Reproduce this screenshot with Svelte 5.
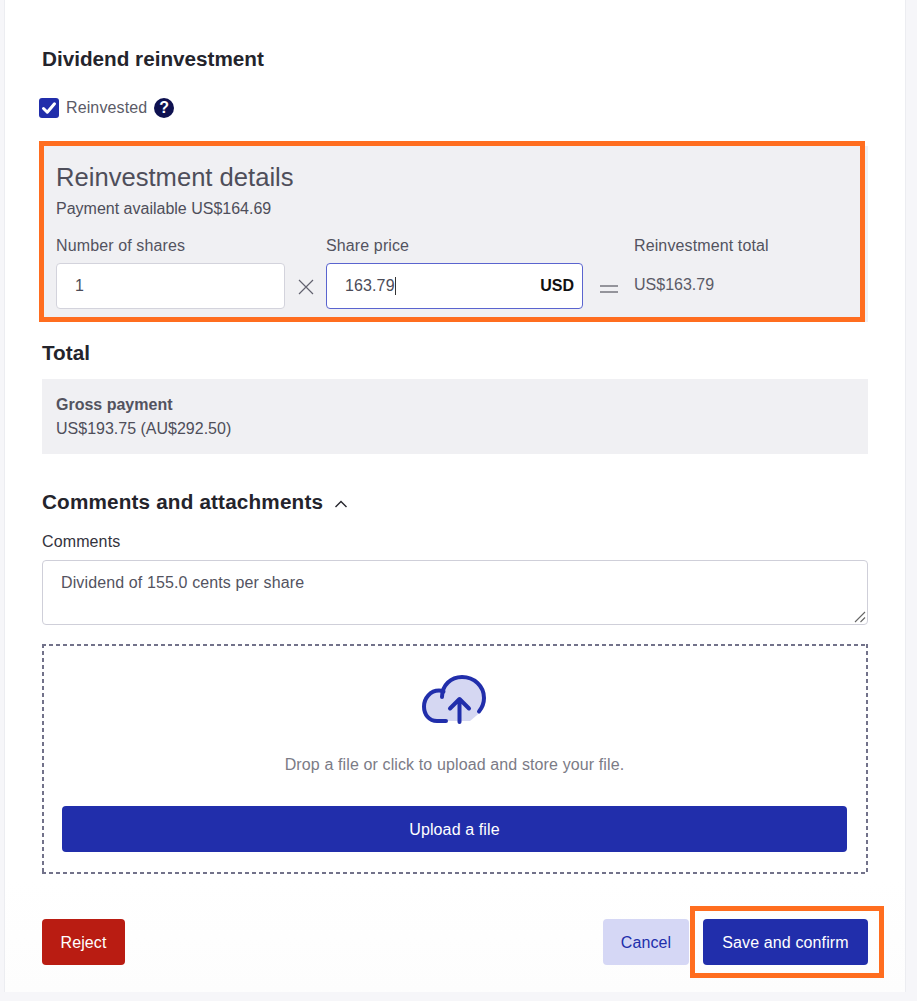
<script>
  const gross = 'US$193.75 (AU$292.50)';
</script>

<div class="page">
  <main class="card">
    <h2 class="h-first">Dividend reinvestment</h2>

    <div class="check-row">
      <span class="checkbox">
        <svg viewBox="0 0 20 20" width="20" height="20"><path d="M4.500 10.500l3.800 3.700L15.500 5.800" fill="none" stroke="#fff" stroke-width="3" stroke-linecap="round" stroke-linejoin="round"/></svg>
      </span>
      <span class="check-label">Reinvested</span>
      <span class="help">?</span>
    </div>

    <section class="panel">
      <div class="annot"></div>
      <h3>Reinvestment details</h3>
      <p class="avail">Payment available US$164.69</p>
      <div class="calc">
        <div class="field f1">
          <span class="label">Number of shares</span>
          <div class="input">1</div>
        </div>
        <svg class="op" viewBox="0 0 16 16" width="16" height="16"><path d="M1 1l14 14M15 1L1 15" stroke="#62626f" stroke-width="1.200" fill="none"/></svg>
        <div class="field f2">
          <span class="label">Share price</span>
          <div class="input focus"><span>163.79<i class="caret"></i></span><b>USD</b></div>
        </div>
        <svg class="op eq" viewBox="0 0 20 10" width="20" height="10"><path d="M1 2h18M1 8h18" stroke="#75757f" stroke-width="1.400" fill="none"/></svg>
        <div class="field f3">
          <span class="label">Reinvestment total</span>
          <div class="total-val">US$163.79</div>
        </div>
      </div>
    </section>

    <h2 class="h-total">Total</h2>
    <section class="gross">
      <strong>Gross payment</strong>
      <span>{gross}</span>
    </section>

    <div class="h-row">
      <h2>Comments and attachments</h2>
      <svg viewBox="0 0 14 8" width="14" height="8"><path d="M1.500 7L7 1.500 12.500 7" fill="none" stroke="#24242c" stroke-width="1.400"/></svg>
    </div>
    <span class="c-label">Comments</span>
    <div class="textarea">
      Dividend of 155.0 cents per share
      <svg class="grip" viewBox="0 0 12 12" width="12" height="12"><path d="M1 11L11 1M6.500 11L11 6.500" stroke="#666" stroke-width="1.100" fill="none"/></svg>
    </div>

    <section class="drop">
      <svg class="cloud" viewBox="0 0 66 50" width="66" height="50">
        <path d="M23 12C27 5 33 1.500 41 1.500C54 1.500 64 11 64 23C64 28 63 33 58.500 38L49 46H16C8 46 2 40 2 31C2 23 8 15 18 15L23 15Z" fill="#d5d7f2"/>
        <path d="M25 46H16C8 46 3 39.500 3 31.500C3 23 9.500 15.500 18 15.500C20 15.500 21.500 16 22.500 16.500" fill="none" stroke="#212eab" stroke-width="4" stroke-linecap="round"/>
        <path d="M21 22C21 10 30 2 41 2C53 2 63 11 63 23C63 29 60.500 33.500 58 36.500" fill="none" stroke="#212eab" stroke-width="4" stroke-linecap="round"/>
        <path d="M38.500 47V24M29 33.500l9.500-9.500 9.500 9.500" fill="none" stroke="#212eab" stroke-width="4" stroke-linecap="round" stroke-linejoin="round"/>
      </svg>
      <p>Drop a file or click to upload and store your file.</p>
      <button class="btn primary upload">Upload a file</button>
    </section>

    <footer>
      <button class="btn danger">Reject</button>
      <div class="right">
        <button class="btn soft">Cancel</button>
        <button class="btn primary save">Save and confirm<span class="annot2"></span></button>
      </div>
    </footer>
  </main>
</div>

<style>
  :global(body) { margin: 0; background: #f6f6f9; }
  .page {
    width: 917px; height: 1001px; overflow: hidden; box-sizing: border-box;
    padding-left: 4px;
    font-family: "Liberation Sans", Arial, sans-serif; color: #53535f;
    font-size: 16px; letter-spacing: 0.12px;
  }
  .card {
    width: 902px; height: 992px; box-sizing: border-box;
    border: solid #ecedf1; border-width: 0 1px 0 1px;
    padding: 0 37px 0 37px;
    background: linear-gradient(#fff, #fff 880px, #fdfdfd);
  }
  h2 { margin: 0; font-size: 20.700px; line-height: 24px; font-weight: 700; color: #24242c; letter-spacing: 0; }
  .h-first { padding-top: 47px; }
  .check-row { display: flex; align-items: center; height: 22px; margin-top: 26px; margin-left: -3px; }
  .checkbox { width: 20px; height: 20px; background: #212eab; border-radius: 3px; display: block; flex: none; }
  .checkbox svg { display: block; }
  .check-label { margin-left: 7px; color: #5b5b67; }
  .help {
    margin-left: 7px; width: 20px; height: 20px; border-radius: 50%; background: #0e1150; color: #fff;
    font-size: 16px; font-weight: 700; line-height: 20px; text-align: center; letter-spacing: 0;
  }
  .panel {
    position: relative; margin-top: 27px; height: 176px; box-sizing: border-box;
    background: #f0f0f3; padding: 15px 14px 0 14px;
  }
  .annot { position: absolute; left: -3px; top: -5px; width: 826px; height: 181px; box-sizing: border-box; border: 5px solid #ff6d1f; pointer-events: none; }
  h3 { margin: 0; font-size: 25.600px; line-height: 32px; font-weight: 400; color: #4e4e5a; letter-spacing: 0; }
  .avail { margin: 7px 0 0; line-height: 18px; color: #4e4e5a; letter-spacing: 0; }
  .calc { display: flex; align-items: flex-start; margin-top: 19px; }
  .label { display: block; line-height: 18px; color: #53535f; }
  .field .input { margin-top: 8px; }
  .f1 { width: 229px; }
  .f2 { width: 257px; }
  .input {
    height: 46px; box-sizing: border-box; background: #fff; border: 1px solid #d3d3dc; border-radius: 4px;
    padding: 0 8px 0 18px; display: flex; align-items: center; justify-content: space-between; color: #4c4c58;
  }
  .focus { border-color: #5a64cf; }
  .focus b { color: #111; font-weight: 700; letter-spacing: 0; }
  .caret { display: inline-block; width: 1px; height: 18px; background: #333; vertical-align: -4px; }
  .op { flex: none; margin: 42px 12px 0 13px; }
  .eq { margin: 47px 15px 0 16px; }
  .total-val { margin-top: 21px; line-height: 18px; color: #5b5b67; letter-spacing: 0; }
  .h-total { margin-top: 19px; }
  .gross {
    margin-top: 14px; height: 75px; box-sizing: border-box; background: #f0f0f3; padding: 17px 14px 0;
    display: flex; flex-direction: column; gap: 6px; line-height: 18px; color: #4e4e5a; letter-spacing: 0;
  }
  .gross strong { font-weight: 700; color: #53535f; }
  .h-row { display: flex; align-items: center; gap: 11px; margin-top: 36px; }
  .h-row h2 { letter-spacing: 0.17px; }
  .h-row svg { margin-top: 3px; }
  .c-label { display: block; margin-top: 19px; line-height: 18px; color: #33333d; }
  .textarea {
    position: relative; margin-top: 9px; height: 65px; box-sizing: border-box; border: 1px solid #cfcfd9; border-radius: 4px;
    padding: 13px 18px; line-height: 18px; color: #53535f;
  }
  .grip { position: absolute; right: 1px; bottom: 1px; }
  .drop {
    margin-top: 19px; height: 230px; box-sizing: border-box;
    background:
      linear-gradient(to right, #72728a 4.500px, transparent 4.500px) top left / 7px 2px repeat-x,
      linear-gradient(to right, #72728a 4.500px, transparent 4.500px) bottom left / 7px 2px repeat-x,
      linear-gradient(to bottom, #72728a 4.500px, transparent 4.500px) top left / 2px 7px repeat-y,
      linear-gradient(to bottom, #72728a 4.500px, transparent 4.500px) top right / 2px 7px repeat-y;
    display: flex; flex-direction: column; align-items: center; padding: 31px 21px 0 20px;
  }
  .cloud { margin-left: -1px; display: block; }
  .drop p { margin: 31px 0 0; line-height: 18px; color: #7b7b86; }
  .btn { border: 0; border-radius: 4px; font: inherit; letter-spacing: inherit; display: block; height: 46px; cursor: pointer; padding: 1px 0 0; }
  .primary { background: #212eab; color: #fff; }
  .upload { width: 100%; margin-top: 32px; }
  footer { display: flex; justify-content: space-between; margin-top: 45px; }
  .right { display: flex; gap: 14px; }
  .danger { width: 83px; background: #b91c12; color: #fff; }
  .soft { width: 86px; background: #d5d7f5; color: #212eab; }
  .save { width: 165px; position: relative; }
  .annot2 { position: absolute; left: -13px; top: -13px; width: 194px; height: 72px; box-sizing: border-box; border: 5px solid #ff6d1f; pointer-events: none; }
</style>
